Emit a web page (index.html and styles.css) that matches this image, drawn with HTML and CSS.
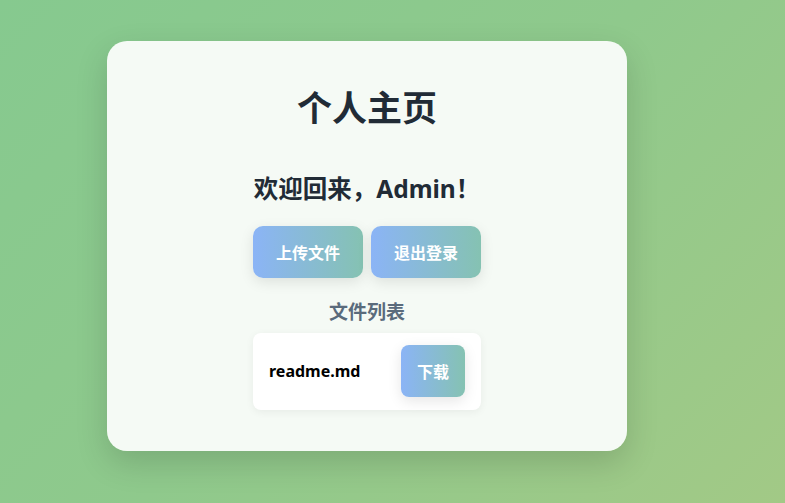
FILE: index.html
```html
<!DOCTYPE html>
<html lang="zh-CN">
<head>
<meta charset="utf-8">
<title>个人主页</title>
<link rel="stylesheet" href="styles.css">
</head>
<body>
<main class="card">
  <h1 class="title">个人主页</h1>
  <div class="content">
    <h2 class="welcome">欢迎回来，Admin！</h2>
    <div class="actions">
      <button class="btn btn-wide">上传文件</button>
      <button class="btn btn-wide">退出登录</button>
    </div>
    <h3 class="list-title">文件列表</h3>
    <div class="file">
      <span class="file-name">readme.md</span>
      <button class="btn btn-small">下载</button>
    </div>
  </div>
</main>
</body>
</html>
```
FILE: styles.css
```css
html, body {
  margin: 0;
  height: 100%;
}
body {
  background: linear-gradient(135deg, #86c98f 0%, #8fc98c 50%, #a2c986 100%);
  font-family: "Noto Sans", "Noto Sans CJK SC", sans-serif;
  padding: 41px 0 0 107px;
  box-sizing: border-box;
}
.card {
  width: 520px;
  height: 410px;
  box-sizing: border-box;
  background: rgba(247, 251, 247, 0.98);
  border-radius: 20px;
  box-shadow: 0 12px 32px rgba(0, 0, 0, 0.15);
  padding: 47px 0 0;
  display: flex;
  flex-direction: column;
  align-items: center;
}
.title {
  margin: 0;
  font-size: 35px;
  line-height: 40px;
  font-weight: 700;
  color: #212b36;
}
.content {
  width: 228px;
  display: flex;
  flex-direction: column;
  align-items: center;
}
.welcome {
  margin: 45px 0 0;
  font-size: 24.5px;
  line-height: 32px;
  font-weight: 700;
  color: #212b36;
  white-space: nowrap;
}
.actions {
  margin-top: 21px;
  display: flex;
  gap: 8px;
}
.btn {
  border: none;
  color: #fff;
  font-family: inherit;
  font-weight: 700;
  font-size: 16px;
  background: linear-gradient(90deg, #8bb4f6 0%, #85c2b2 100%);
  box-shadow: 0 4px 14px rgba(0, 0, 0, 0.1);
  padding: 0;
  cursor: pointer;
}
.btn-wide {
  width: 110px;
  height: 52px;
  border-radius: 10px;
}
.list-title {
  margin: 21px 0 0;
  font-size: 19px;
  line-height: 26px;
  font-weight: 700;
  color: #5a6b7c;
}
.file {
  margin-top: 8px;
  width: 228px;
  box-sizing: border-box;
  background: #fff;
  border-radius: 8px;
  box-shadow: 0 2px 8px rgba(0, 0, 0, 0.06);
  padding: 12px 16px 13px;
  display: flex;
  align-items: center;
  justify-content: space-between;
}
.file-name {
  font-size: 16px;
  font-weight: 700;
  color: #000;
}
.btn-small {
  width: 64px;
  height: 52px;
  border-radius: 8px;
}
```
